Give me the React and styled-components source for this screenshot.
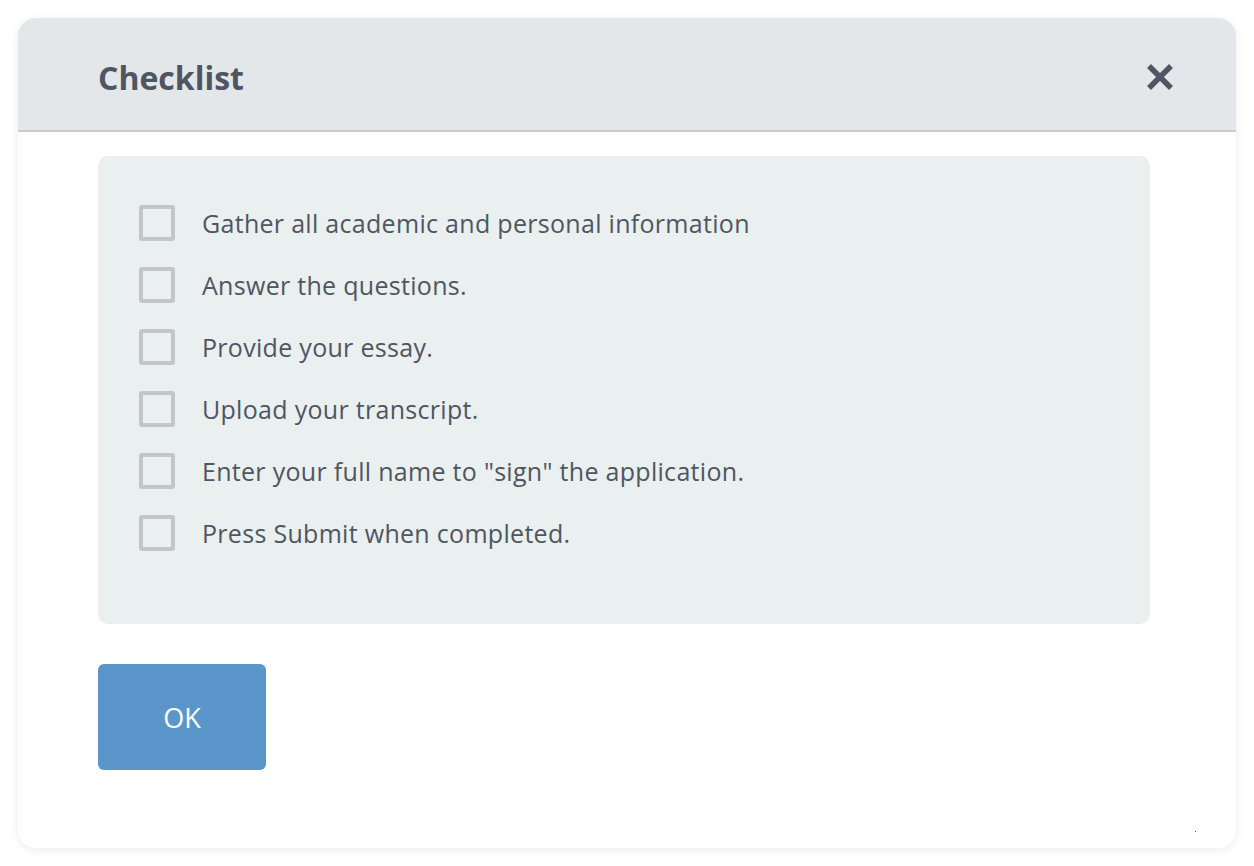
import styled, { createGlobalStyle } from "styled-components";
import { useState } from "react";

const GlobalStyle = createGlobalStyle`
  html, body {
    margin: 0;
    padding: 0;
    background: #ffffff;
  }
  body {
    font-family: "Open Sans", "Liberation Sans", sans-serif;
  }
`;

const Page = styled.div`
  width: 1254px;
  height: 866px;
  padding: 18px;
  box-sizing: border-box;
`;

const Modal = styled.div`
  width: 1218px;
  height: 830px;
  background: #ffffff;
  border-radius: 18px;
  box-shadow: 0 2px 10px rgba(0, 0, 0, 0.08);
  display: flex;
  flex-direction: column;
  overflow: hidden;
  position: relative;
`;

const Header = styled.div`
  height: 114px;
  flex-shrink: 0;
  background: #e3e7ea;
  border-bottom: 2px solid #c9cbcd;
  box-sizing: border-box;
  display: flex;
  align-items: center;
  justify-content: space-between;
  padding: 6px 56px 0 80px;
`;

const Title = styled.h2`
  margin: 0;
  font-size: 32px;
  font-weight: 700;
  color: #4f5661;
  letter-spacing: 0;
`;

const CloseButton = styled.button`
  background: none;
  border: none;
  padding: 0;
  width: 40px;
  height: 40px;
  display: flex;
  align-items: center;
  justify-content: center;
  cursor: pointer;
  color: #4f5661;
`;

const Body = styled.div`
  padding: 24px 86px 0 80px;
  display: flex;
  flex-direction: column;
  gap: 40px;
`;

const Panel = styled.div`
  background: #eaeff0;
  border-radius: 10px;
  height: 468px;
  box-sizing: border-box;
  padding: 49px 40px 0 41px;
  display: flex;
  flex-direction: column;
  gap: 26px;
`;

const Row = styled.label`
  display: flex;
  align-items: center;
  gap: 27px;
  height: 36px;
  cursor: pointer;
`;

const Box = styled.span`
  width: 36px;
  height: 36px;
  box-sizing: border-box;
  border: 4px solid ${(p) => (p.$checked ? "#5b96cb" : "#c3c6c9")};
  border-radius: 3px;
  background: ${(p) => (p.$checked ? "#5b96cb" : "transparent")};
  flex-shrink: 0;
`;

const ItemText = styled.span`
  font-size: 25px;
  color: #4f5661;
  letter-spacing: 0.3px;
`;

const OkButton = styled.button`
  width: 168px;
  height: 106px;
  border: none;
  border-radius: 6px;
  background: #5b96cb;
  color: #ffffff;
  font-family: "Open Sans", "Liberation Sans", sans-serif;
  font-size: 27px;
  cursor: pointer;
`;

const Speck = styled.span`
  position: absolute;
  right: 40px;
  bottom: 16px;
  width: 1px;
  height: 1px;
  background: #555;
`;

const items = [
  "Gather all academic and personal information",
  "Answer the questions.",
  "Provide your essay.",
  "Upload your transcript.",
  'Enter your full name to "sign" the application.',
  "Press Submit when completed.",
];

export default function App() {
  const [checked, setChecked] = useState({});

  const toggle = (i) => setChecked((prev) => ({ ...prev, [i]: !prev[i] }));

  return (
    <>
      <GlobalStyle />
      <Page>
        <Modal>
          <Header>
            <Title>Checklist</Title>
            <CloseButton aria-label="Close">
              <svg width="28" height="28" viewBox="0 0 28 28">
                <path
                  d="M3 3 L25 25 M25 3 L3 25"
                  stroke="currentColor"
                  strokeWidth="5.5"
                  strokeLinecap="butt"
                />
              </svg>
            </CloseButton>
          </Header>
          <Body>
            <Panel>
              {items.map((text, i) => (
                <Row key={i} onClick={() => toggle(i)}>
                  <Box $checked={!!checked[i]} />
                  <ItemText>{text}</ItemText>
                </Row>
              ))}
            </Panel>
            <div>
              <OkButton>OK</OkButton>
            </div>
          </Body>
          <Speck />
        </Modal>
      </Page>
    </>
  );
}
